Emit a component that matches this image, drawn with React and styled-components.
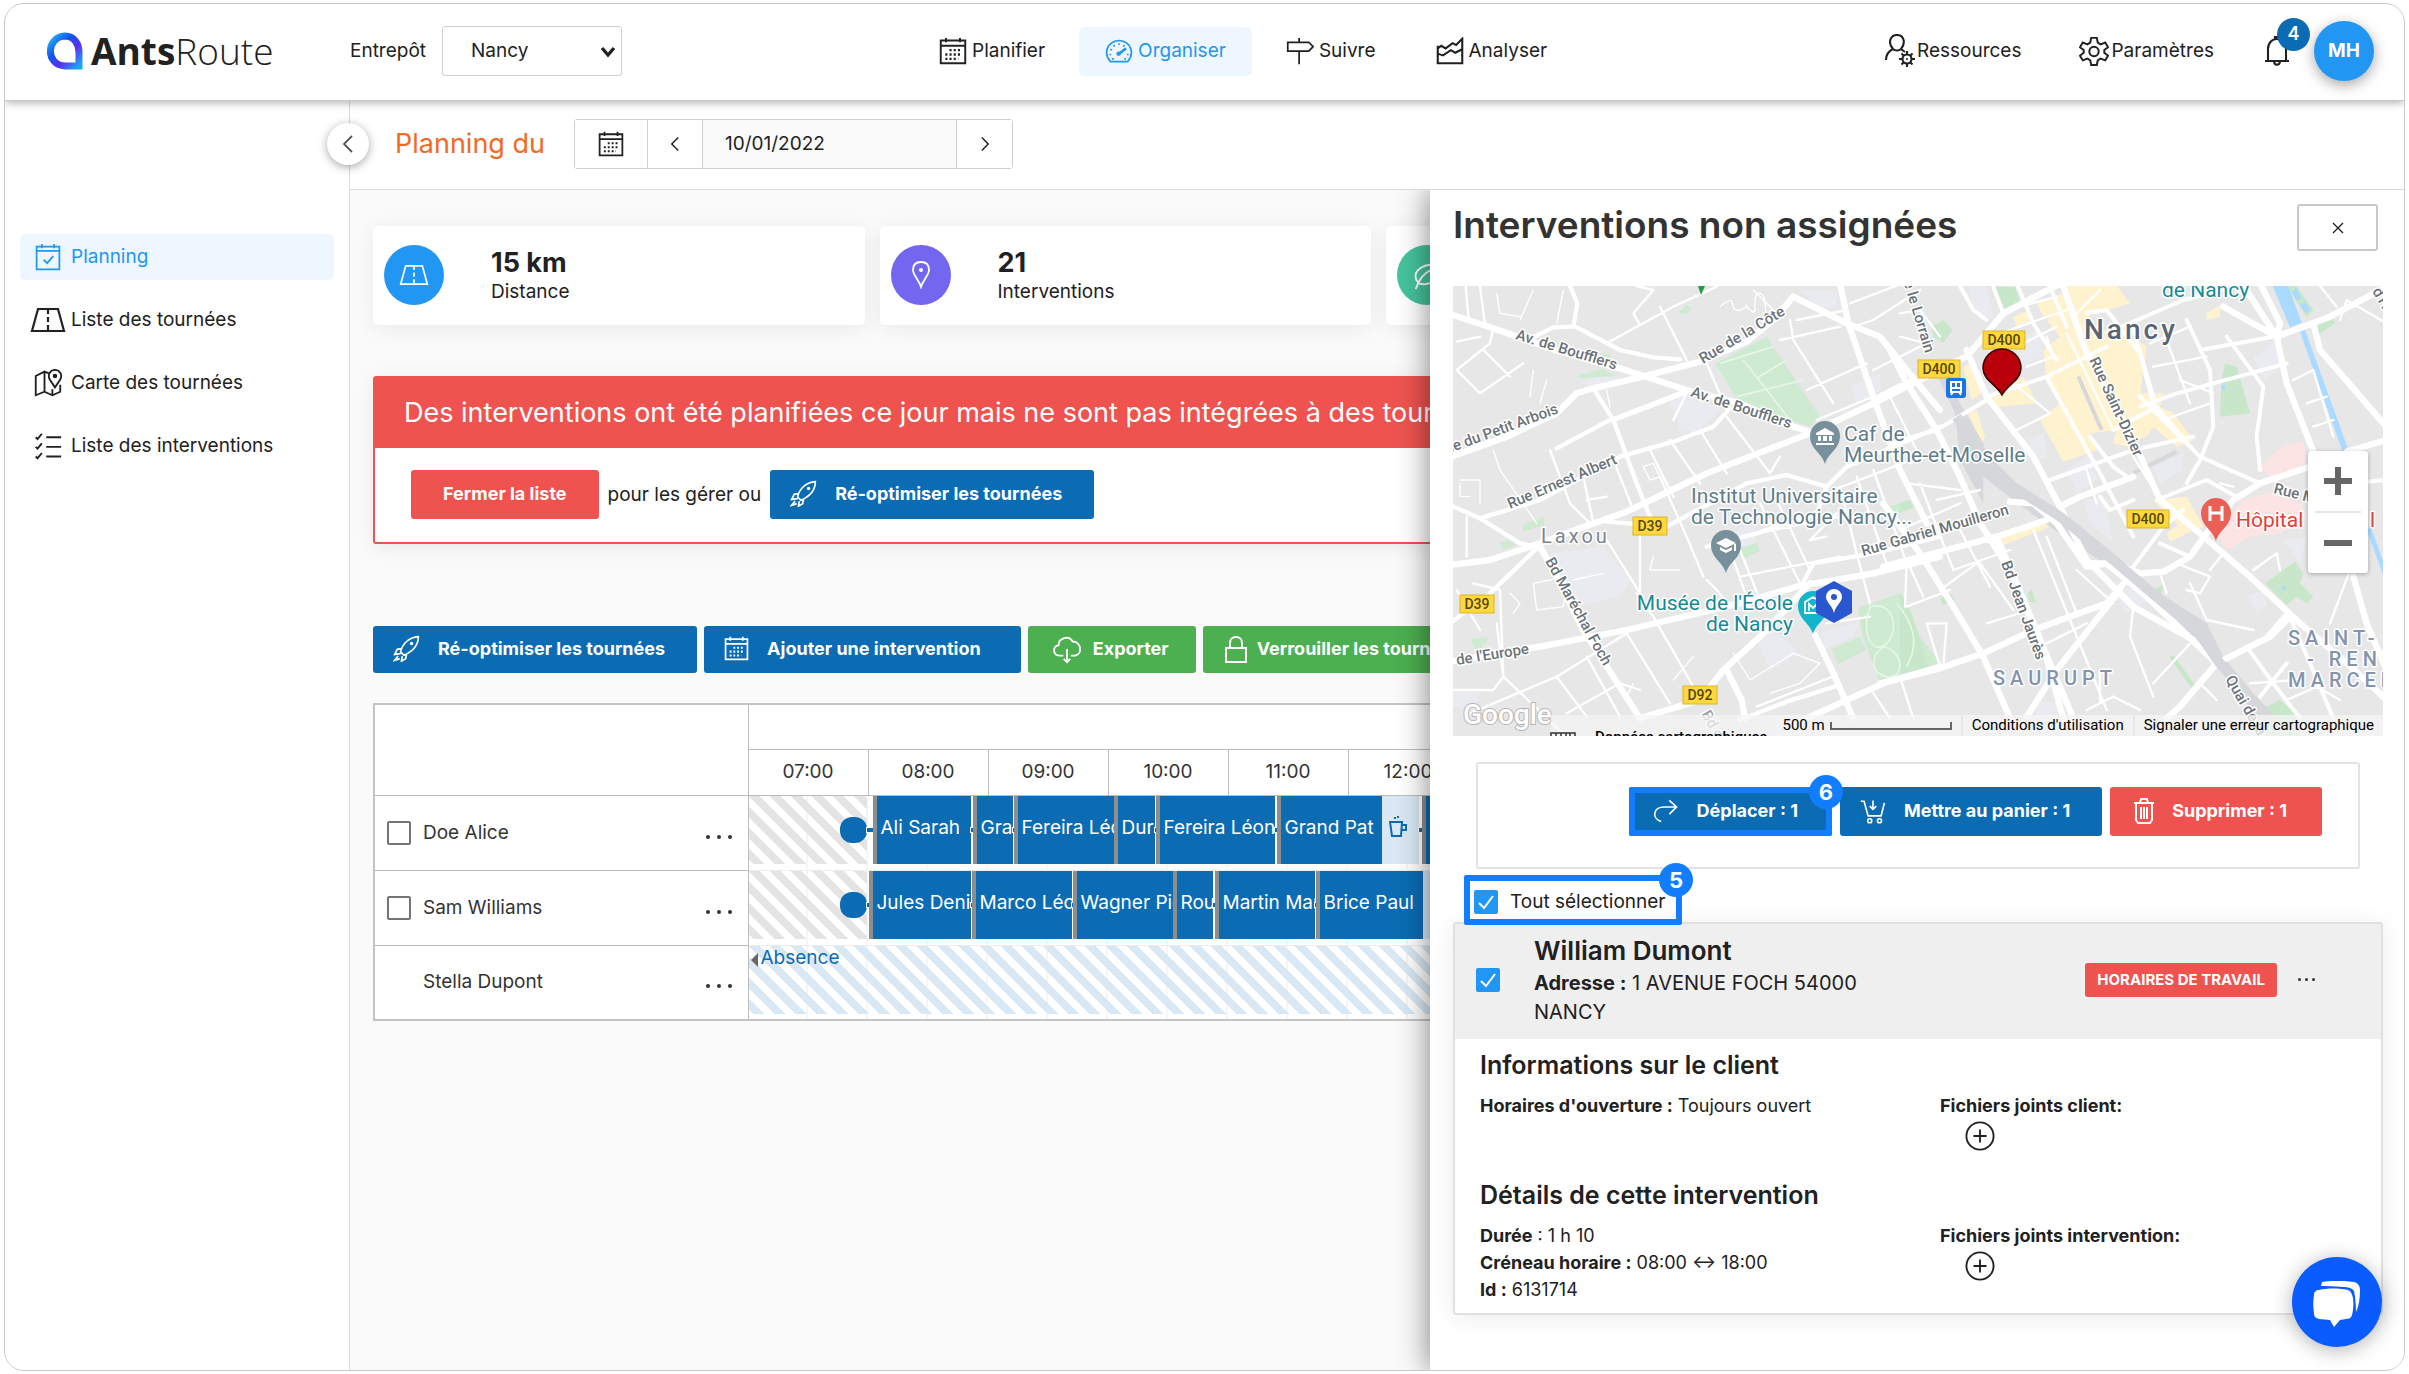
import React from "react";
import styled, { createGlobalStyle, css } from "styled-components";

const blue = "#0b6cb4";
const azure = "#2196f3";
const red = "#ef5350";
const green = "#4caf50";
const ink = "#212121";
const marker = "#127dff";

const GlobalStyle = createGlobalStyle`
  *, *::before, *::after { box-sizing: border-box; }
  html, body { margin: 0; background: #fff; }
  body, button, input, select {
    font-family: Inter, "Open Sans", sans-serif;
    font-size: 19px;
    line-height: 24px;
    color: ${ink};
  }
  button { cursor: pointer; }
  h1, h2, h3, p, ul { margin: 0; padding: 0; }
  svg { display: block; flex: none; }
`;

/* ---------- icons ---------- */

const Icon = ({ size = 28, w, h, box = "0 0 32 32", sw = 2, children }) => (
  <svg
    width={w || size}
    height={h || size}
    viewBox={box}
    fill="none"
    stroke="currentColor"
    strokeWidth={sw}
    aria-hidden="true"
  >
    {children}
  </svg>
);

const CalendarIcon = ({ size = 28, sw = 2.2 }) => (
  <Icon size={size} sw={sw}>
    <path d="M2 4H30V30H2ZM2 10H30M8 1V6M24 1V6" />
    <path strokeDasharray="2.4 2.4" d="M12 15H26M7.2 20H26M7.2 25H22" strokeWidth="2.6" />
  </Icon>
);
const PlanningIcon = () => (
  <Icon>
    <path d="M3 4H29V30H3ZM3 9H29M9 1V6M23 1V6M11 19L15 23L22 15" />
  </Icon>
);
const GaugeIcon = () => (
  <Icon>
    <path d="M6 28C-2 19 2 5 16 4C30 5 34 19 26 28Z" />
    <path d="M15 20L24 13" strokeWidth="3" />
    <circle cx="15.500" cy="19" r="2.500" fill="currentColor" stroke="none" />
    <path d="M16 7V9M10 9L11 11M22 9L21 11M6 14L8 15M5 20H7M27 20H25M8 25H10M24 25H22" strokeWidth="1.800" />
  </Icon>
);
const SignIcon = () => (
  <Icon>
    <path d="M2 6H26L31 11L26 16H2ZM15 1V6M15 16V31" />
  </Icon>
);
const AnalyseIcon = () => (
  <Icon sw={2.4}>
    <path d="M2 10V30H30V2L23 9L19 7L11 13L6 10L2 13M2 19L8 21L17 15L22 18L30 14" />
  </Icon>
);
const PersonGearIcon = () => (
  <Icon w={32} h={34} box="0 0 32 34" sw={2.1}>
    <path d="M3 26C3 20 6 17 10 15C4 8 8 1 14 1C21 1 23 9 18 15C16 17 12 17 10 15M18 15L22 18" />
    <circle cx="24" cy="25" r="4.500" />
    <circle cx="24" cy="25" r="1" fill="currentColor" stroke="none" />
    <path d="M24 17V20.500M24 29.500V33M16 25H19.500M28.500 25H32M18.500 19.500L20.800 21.800M27.200 28.200L29.500 30.500M18.500 30.500L20.800 28.200M27.200 21.800L29.500 19.500" />
  </Icon>
);
const GearIcon = () => (
  <Icon size={30} sw={2.1}>
    <path d="M13 2H19L20 7L23 9L28 7L31 12L27 15V18L31 21L28 26L23 24L20 26L19 31H13L12 26L9 24L4 26L1 21L5 18V15L1 12L4 7L9 9L12 7Z" />
    <circle cx="16" cy="16.500" r="5" />
  </Icon>
);
const BellIcon = () => (
  <Icon w={26} h={30} box="0 0 26 30" sw={2.1}>
    <path d="M1 25H25M4 25V13C4 7 8 3 13 3C18 3 22 7 22 13V25M11 3V1H15V3M10 25C10 30 16 30 16 25" />
  </Icon>
);
const RoadIcon = ({ w = 36, sw = 2.2 }) => (
  <Icon w={w} h={Math.round((w * 26) / 36)} box="0 0 36 26" sw={sw}>
    <path d="M8 2H28L34 24H2Z" />
    <path d="M18 2V24" strokeDasharray="5 3" />
  </Icon>
);
const MapIcon = () => (
  <Icon sw={2.1}>
    <path d="M17 5L12 3L2 8V30L12 26L21 30L30 26V18M12 3V26M21 23V30" />
    <path d="M24 21L18 12C15 6 19 1 24 1C29 1 33 6 30 12Z" />
    <circle cx="24" cy="8" r="1.500" fill="currentColor" />
  </Icon>
);
const ChecklistIcon = () => (
  <Icon sw={2.2}>
    <path d="M14 6H31M14 17H31M14 28H31M2 6L4 8L9 2M2 17L4 19L9 13M2 28L4 30L9 24" />
  </Icon>
);
const PinIcon = () => (
  <Icon w={18} h={28} box="0 0 18 28" sw={1.8}>
    <path d="M9 26C7 19 1 14 1 9C1 4 4 1 9 1C14 1 17 4 17 9C17 14 11 19 9 26Z" />
    <circle cx="9" cy="9" r="2" fill="currentColor" stroke="none" />
  </Icon>
);
const LeafIcon = () => (
  <Icon size={30} sw={2}>
    <path d="M7 25C-1 15 6 5 27 4C30 18 21 29 7 25M4 31C7 21 13 14 21 10" />
  </Icon>
);
const RocketIcon = () => (
  <Icon size={27} sw={2}>
    <path d="M9 20C11 11 18 3 30 2C30 13 22 20 13 24ZM10 16L5 17L2 23L9 22M16 23L15 28L10 31L11 25M6 25L2 30L8 28" />
    <circle cx="22" cy="10" r="2" fill="currentColor" stroke="none" />
  </Icon>
);
const CloudIcon = () => (
  <Icon w={30} h={30} sw={2}>
    <path d="M12 23H8C1 23 0 13 7 12C7 4 18 1 22 8C31 8 33 21 25 23H20M16 16V30M12.500 26.500L16 30L19.500 26.500" />
  </Icon>
);
const LockIcon = () => (
  <Icon w={22} h={28} box="0 0 22 28" sw={2}>
    <path d="M1 13H21V27H1ZM5 13V8C5 0 17 0 17 8V13" />
  </Icon>
);
const ArrowIcon = () => (
  <Icon size={26} sw={2}>
    <path d="M10 29C-2 25 0 11 14 11H29M20 3L29 11L20 20" />
  </Icon>
);
const CartIcon = () => (
  <Icon size={26} sw={2}>
    <path d="M1 4H5L10 22H26L30 6M16 3V13M12 10L16 14L20 10" />
    <circle cx="12" cy="28" r="2.500" />
    <circle cx="24" cy="28" r="2.500" />
  </Icon>
);
const TrashIcon = () => (
  <Icon w={20} h={26} box="0 0 20 26" sw={2}>
    <path d="M0 5H20M2 5V22L4 25H16L18 22V5M6 5L7 1H13L14 5M7 9V21M10 9V21M13 9V21" />
  </Icon>
);
const CupIcon = () => (
  <Icon w={18} h={22} box="0 0 18 22" sw={2}>
    <path d="M1 6H13L12 20H3ZM13 9H17V14H13M6 1V3M9 0V2" />
  </Icon>
);
const Chevron = ({ right, size = 16 }) => (
  <Icon w={size / 2} h={size} box="0 0 10 20" sw={1.8}>
    <path d={right ? "M1 2L9 10L1 18" : "M9 2L1 10L9 18"} />
  </Icon>
);
const PlusCircleIcon = () => (
  <Icon size={30} sw={2}>
    <circle cx="16" cy="16" r="14.500" />
    <path d="M16 9V23M9 16H23" />
  </Icon>
);
const ChatIcon = () => (
  <svg width="50" height="46" viewBox="0 0 50 46" fill="#fff" aria-hidden="true">
    <path d="M10 1C24-1 35 0 42 1C46 2 48 5 48 9C48 17 47 25 44 31C44 22 43 15 42 10C40 7 36 6 31 6C22 5 15 5 9 5Z" />
    <path d="M7 9C15 7 28 7 36 9C39 10 40 13 41 17C42 24 41 30 40 34C39 37 37 38 34 38L28 39L22 46L18 39L7 38C3 37 2 35 2 32C1 26 1 20 2 14C2 11 4 9 7 9Z" />
  </svg>
);
const LogoMark = () => (
  <svg width="36" height="38" viewBox="0 0 36 38" fill="none" aria-hidden="true">
    <defs>
      <linearGradient id="mark" x1="0" y1="0" x2="1" y2="1">
        <stop offset="0" stopColor="#20b7f5" />
        <stop offset="0.350" stopColor="#1254f0" />
        <stop offset="0.650" stopColor="#5b2ff0" />
        <stop offset="1" stopColor="#19a8f2" />
      </linearGradient>
    </defs>
    <path
      d="M32 34H18C-2 33-1 5 18 4C27 4 32 12 32 20Z"
      stroke="url(#mark)"
      strokeWidth="7"
    />
  </svg>
);

/* ---------- shell ---------- */

const Page = styled.div`
  padding: 3px 4px;
  height: 100vh;
  min-height: 900px;
`;
const Frame = styled.div`
  height: 100%;
  display: flex;
  flex-direction: column;
  border: 1px solid #c8c8c8;
  border-radius: 20px;
  overflow: hidden;
  background: #fff;
`;
const Header = styled.header`
  position: relative;
  z-index: 3;
  flex: none;
  height: 97px;
  display: grid;
  grid-template-columns: 345px 563px 1fr auto;
  align-items: center;
  padding: 0 30px 2px 0;
  background: #fff;
  border-bottom: 1px solid #c9c9c9;
  box-shadow: 0 2px 8px rgba(0, 0, 0, 0.3);
`;
const Logo = styled.a`
  display: flex;
  align-items: center;
  gap: 8px;
  padding-left: 42px;
  color: ${ink};
  text-decoration: none;
  font-family: "Open Sans", sans-serif;
  font-size: 37px;
  font-weight: 300;
  line-height: 44px;
  b { font-weight: 700; }
`;
const Depot = styled.label`
  display: flex;
  align-items: center;
  gap: 16px;
`;
const SelectBox = styled.span`
  position: relative;
  display: flex;
  svg { position: absolute; right: 6px; top: 19px; pointer-events: none; }
`;
const Select = styled.select`
  appearance: none;
  width: 180px;
  height: 50px;
  padding: 0 28px;
  background: #fff;
  border: 1px solid #cfcfcf;
  border-radius: 3px;
`;
const Nav = styled.nav`
  display: flex;
  align-items: center;
  gap: 8px;
`;
const NavLink = styled.a`
  display: flex;
  align-items: center;
  gap: 5px;
  height: 49px;
  padding: 0 26px;
  border-radius: 5px;
  color: ${ink};
  text-decoration: none;
  ${(p) => p.$active && css`color: ${azure}; background: #eef7ff;`}
`;
const Tools = styled.div`
  display: flex;
  align-items: center;
`;
const ToolLink = styled.a`
  display: flex;
  align-items: center;
  gap: 2px;
  margin-right: 58px;
  color: ${ink};
  text-decoration: none;
`;
const BellButton = styled.button`
  position: relative;
  margin: 0 24px 0 -8px;
  padding: 0;
  border: 0;
  background: none;
`;
const Badge = styled.span`
  position: absolute;
  top: -18px;
  right: -20px;
  width: 33px;
  height: 33px;
  border-radius: 50%;
  background: ${blue};
  color: #fff;
  font-weight: 600;
  font-size: 18px;
  line-height: 32px;
  text-align: center;
`;
const Avatar = styled.button`
  width: 60px;
  height: 60px;
  border: 0;
  border-radius: 50%;
  background: ${azure};
  color: #fff;
  font-weight: 700;
  box-shadow: 0 4px 14px rgba(0, 0, 0, 0.35);
`;

const Body = styled.div`
  flex: 1;
  min-height: 0;
  display: flex;
`;
const Sidebar = styled.aside`
  position: relative;
  z-index: 2;
  flex: none;
  width: 345px;
  padding: 133px 15px 0;
  border-right: 1px solid #d9d9d9;
  background: #fff;
`;
const SideList = styled.ul`
  list-style: none;
  display: flex;
  flex-direction: column;
  gap: 17px;
`;
const SideLink = styled.a`
  display: grid;
  grid-template-columns: 47px 1fr;
  align-items: center;
  height: 46px;
  padding-left: 4px;
  border-radius: 5px;
  color: ${ink};
  text-decoration: none;
  svg { justify-self: center; }
  ${(p) => p.$active && css`color: ${azure}; background: #eef7ff;`}
`;
const Collapse = styled.button`
  position: absolute;
  top: 22px;
  right: -20px;
  width: 42px;
  height: 42px;
  display: grid;
  place-items: center;
  padding: 0;
  border: 0;
  border-radius: 50%;
  background: #fff;
  color: #555;
  box-shadow: 0 2px 10px rgba(0, 0, 0, 0.35);
`;
const Main = styled.main`
  flex: 1;
  min-width: 0;
  display: flex;
  flex-direction: column;
`;
const DateBar = styled.div`
  flex: none;
  height: 89px;
  display: flex;
  align-items: center;
  gap: 29px;
  padding: 0 45px 3px;
  border-bottom: 1px solid #d9d9d9;
`;
const DateTitle = styled.h1`
  color: #f36a1f;
  font-size: 27px;
  line-height: 36px;
  font-weight: 400;
`;
const DateGroup = styled.div`
  display: flex;
  height: 50px;
  border: 1px solid #d0d0d0;
  border-radius: 3px;
`;
const DateButton = styled.button`
  width: ${(p) => (p.$wide ? 72 : 55)}px;
  display: grid;
  place-items: center;
  padding: 0;
  border: 0;
  background: #fff;
  & + & { border-left: 1px solid #d0d0d0; }
`;
const DateInput = styled.input`
  width: 255px;
  padding: 0 22px;
  border: 1px solid #d0d0d0;
  border-width: 0 1px;
  background: #fafafa;
`;
const Stage = styled.div`
  position: relative;
  flex: 1;
  min-height: 0;
  overflow: hidden;
  background: #fafafa;
  padding: 36px 20px 0 23px;
`;

/* ---------- planning ---------- */

const Cards = styled.div`
  display: grid;
  grid-template-columns: repeat(4, 1fr);
  gap: 15px;
`;
const Card = styled.section`
  display: flex;
  align-items: center;
  gap: 47px;
  height: 99px;
  padding: 0 0 2px 11px;
  border-radius: 5px;
  background: #fff;
  box-shadow: 0 3px 20px rgba(0, 0, 0, 0.07);
`;
const Disc = styled.span`
  width: 60px;
  height: 60px;
  display: grid;
  place-items: center;
  border-radius: 50%;
  color: #fff;
  background: ${(p) => p.$tone};
`;
const Figure = styled.div`
  font-size: 27px;
  line-height: 34px;
  font-weight: 700;
`;
const Alert = styled.section`
  margin-top: 51px;
  border: 2px solid ${red};
  border-radius: 3px;
  background: #fff;
  box-shadow: 0 3px 20px rgba(0, 0, 0, 0.07);
`;
const AlertTitle = styled.h2`
  padding: 0 29px;
  background: ${red};
  color: #fff;
  font-size: 27px;
  line-height: 70px;
  font-weight: 400;
  white-space: nowrap;
  overflow: hidden;
`;
const AlertBody = styled.div`
  display: flex;
  align-items: center;
  gap: 9px;
  padding: 22px 36px 23px;
`;
const Button = styled.button`
  display: flex;
  align-items: center;
  gap: ${(p) => p.$gap || 18}px;
  flex: none;
  height: ${(p) => p.$h || 47}px;
  padding: 0 ${(p) => p.$pad || 32}px 2px ${(p) => p.$lead || 20}px;
  border: 0;
  border-radius: 3px;
  background: ${(p) => p.$tone || blue};
  color: #fff;
  font-size: 18px;
  font-weight: 700;
  white-space: nowrap;
`;
const Actions = styled.div`
  display: flex;
  gap: 7px;
  margin: 82px 0 30px;
`;
const TableClip = styled.div`
  overflow: hidden;
`;
const Gantt = styled.table`
  table-layout: fixed;
  width: 2054px;
  border-collapse: collapse;
  border: 2px solid #c4c4c4;
  background: #fff;
  th, td { padding: 0; font-weight: 400; }
`;
const HeadCell = styled.th`
  height: ${(p) => p.$h || 46}px;
  border: 1px solid #bdbdbd;
  color: #333;
`;
const NameCell = styled.th`
  height: 75px;
  border: 1px solid #bdbdbd;
`;
const NameRow = styled.div`
  display: grid;
  grid-template-columns: 24px 1fr auto;
  align-items: center;
  gap: 12px;
  padding: 0 16px 0 12px;
  color: #333;
  text-align: left;
`;
const Tick = styled.input`
  appearance: none;
  width: 24px;
  height: 24px;
  margin: 0;
  border: 2px solid #757575;
  border-radius: 2px;
  background: #fff;
  &:checked {
    border-color: ${azure};
    background: ${azure} url("data:image/svg+xml,%3Csvg xmlns='http://www.w3.org/2000/svg' viewBox='0 0 20 20' fill='none' stroke='white' stroke-width='2'%3E%3Cpath d='M3 11L8 16L17 4'/%3E%3C/svg%3E") center / 20px no-repeat;
  }
`;
const MoreButton = styled.button`
  display: flex;
  gap: 7px;
  padding: 8px 0 0;
  border: 0;
  background: none;
  &::before, &::after, span {
    content: "";
    width: 4px;
    height: 4px;
    border-radius: 50%;
    background: #333;
  }
  ${(p) => p.$small && css`
    gap: 4px;
    padding: 0;
    &::before, &::after, span { width: 3px; height: 3px; }
  `}
`;
const LaneCell = styled.td`
  height: 75px;
  vertical-align: top;
  border-bottom: 1px solid #ededed;
  background: repeating-linear-gradient(90deg, transparent 0 58px, #ececec 58px 59px, transparent 59px 60px);
`;
const stripes = (c) => css`
  background: linear-gradient(45deg, ${c} 25%, transparent 25% 50%, ${c} 50% 75%, transparent 75%) 0 0 / 21px 21px;
`;
const Lane = styled.div`
  display: flex;
  align-items: center;
  height: 69px;
`;
const Closed = styled.div`
  ${stripes("#e4e4e4")}
  flex: none;
  width: 118px;
  height: 68px;
  display: flex;
  align-items: center;
  justify-content: flex-end;
`;
const Start = styled.span`
  width: 27px;
  height: 26px;
  border-radius: 12px;
  background: ${blue};
`;
const Travel = styled.span`
  flex: none;
  height: 4px;
  background: ${blue};
  box-shadow: 0 0 0 1px #fff;
`;
const Visit = styled.div`
  flex: none;
  height: 68px;
  padding-left: 4px;
  border-left: 4px solid #8e8e8e;
  background: ${blue};
  color: #fff;
  line-height: 64px;
  white-space: nowrap;
  overflow: hidden;
`;
const Pause = styled.div`
  flex: none;
  height: 68px;
  padding: 20px 7px;
  background: #d9e8f4;
  color: ${blue};
`;
const Absence = styled.div`
  ${stripes("#d9e8f3")}
  display: flex;
  align-items: flex-start;
  gap: 3px;
  height: 68px;
  padding: 0 2px;
  color: ${blue};
  &::before {
    content: "";
    margin-top: 7px;
    border: 7px solid transparent;
    border-left: 0;
    border-right-color: #666;
  }
`;

/* ---------- drawer ---------- */

const Drawer = styled.aside`
  position: absolute;
  top: 0;
  right: 0;
  bottom: 0;
  width: 974px;
  max-width: 100%;
  padding: 12px 21px 0 23px;
  background: #fff;
  box-shadow: -2px 0 28px rgba(0, 0, 0, 0.45);
`;
const DrawerHead = styled.div`
  display: flex;
  justify-content: space-between;
  align-items: flex-start;
  padding-right: 5px;
`;
const DrawerTitle = styled.h2`
  color: #333;
  font-size: 37px;
  line-height: 46px;
  font-weight: 600;
`;
const Close = styled.button`
  width: 81px;
  height: 47px;
  margin-top: 2px;
  display: grid;
  place-items: center;
  border: 2px solid #c9c9c9;
  border-radius: 3px;
  background: #fff;
`;
const MapBox = styled.div`
  position: relative;
  height: 450px;
  margin-top: 35px;
  overflow: hidden;
  background: #e7e7e7;
`;
const MapSvg = styled.svg`
  width: 100%;
  height: 450px;
  font-family: Roboto, sans-serif;
`;
const Zoom = styled.div`
  position: absolute;
  right: 15px;
  top: 165px;
  width: 60px;
  height: 122px;
  padding: 0 7px;
  display: grid;
  border-radius: 3px;
  background: #fff;
  box-shadow: 0 1px 4px rgba(0, 0, 0, 0.3);
`;
const ZoomButton = styled.button`
  display: grid;
  place-items: center;
  padding: 0;
  border: 0;
  background: none;
  color: #666;
  & + & { border-top: 2px solid #e6e6e6; }
`;
const Credits = styled.div`
  position: absolute;
  right: 0;
  bottom: 0;
  height: 21px;
  display: flex;
  gap: 2px;
  span, a {
    display: flex;
    align-items: center;
    gap: 5px;
    padding: 0 9px;
    background: rgba(245, 245, 245, 0.75);
    color: #000;
    font-family: Roboto, sans-serif;
    font-size: 15px;
    line-height: 21px;
    text-decoration: none;
  }
`;
const ScaleBar = styled.i`
  width: 122px;
  height: 8px;
  border: 2px solid #666;
  border-top: 0;
`;
const Bulk = styled.div`
  display: flex;
  justify-content: flex-end;
  align-items: flex-start;
  gap: 8px;
  height: 107px;
  margin: 26px 23px 0;
  padding: 23px 36px 0;
  border: 2px solid #e3e3e3;
  border-radius: 3px;
`;
const Callout = styled.div`
  position: relative;
  flex: none;
  display: flex;
  align-items: center;
  border-radius: 2px;
  ${(p) => p.$label && css`
    width: 218px;
    height: 50px;
    margin: 6px 0 -3px 11px;
    padding: 4px 10px 0;
    z-index: 1;
  `}
  &::before {
    content: "";
    position: absolute;
    inset: 0;
    border: 6px solid ${marker};
    border-radius: 2px;
    pointer-events: none;
  }
  &::after {
    content: "${(p) => p.$n}";
    position: absolute;
    right: -11px;
    top: -12px;
    width: 34px;
    height: 34px;
    border-radius: 50%;
    background: ${marker};
    color: #fff;
    font-size: 22px;
    font-weight: 700;
    line-height: 34px;
    text-align: center;
  }
`;
const SelectAll = styled.label`
  display: flex;
  align-items: center;
  gap: 12px;
`;
const JobCard = styled.article`
  border: 2px solid #e0e0e0;
  border-radius: 3px;
  box-shadow: 0 3px 24px rgba(0, 0, 0, 0.08);
`;
const JobHead = styled.header`
  display: grid;
  grid-template-columns: 58px 340px 1fr auto 104px;
  align-items: center;
  padding: 7px 0 11px 21px;
  height: 115px;
  background: #efefef;
`;
const Heading = styled.h3`
  font-size: ${(p) => (p.$name ? 26 : 25)}px;
  line-height: 36px;
  font-weight: 600;
`;
const Address = styled.p`
  font-size: 20px;
  line-height: 29px;
`;
const Tag = styled.span`
  grid-column: 4;
  padding: 0 12px;
  border-radius: 3px;
  background: ${red};
  color: #fff;
  font-size: 15px;
  font-weight: 700;
  line-height: 34px;
`;
const MoreSlot = styled.div`
  padding-left: 21px;
`;
const JobBody = styled.div`
  display: grid;
  grid-template-columns: 460px 1fr;
  padding: 8px 25px 6px;
  font-size: 18px;
  line-height: 27px;
  h3 { grid-column: 1 / -1; margin-bottom: 9px; }
  b { font-weight: 700; }
`;
const Detail = styled.div`
  min-height: 85px;
`;
const AddButton = styled.button`
  display: block;
  margin: 2px 0 0 25px;
  padding: 0;
  border: 0;
  background: none;
`;
const Chat = styled.button`
  position: absolute;
  right: 22px;
  bottom: 23px;
  width: 90px;
  height: 90px;
  display: grid;
  place-items: center;
  padding: 4px 0 0;
  border: 0;
  border-radius: 50%;
  background: #0a5cff;
  box-shadow: 0 3px 20px rgba(0, 0, 0, 0.3);
`;

/* ---------- map drawing ---------- */

const westMajor =
  "M30 132L160 175L330 235L540 295L740 360L900 400L1060 470L1110 485M460 355L600 322L780 275L920 215L1000 150L1060 80M30 562L200 500L350 430L410 370L460 355M30 885L150 870L300 820L420 775L560 725L800 610L1110 490L1300 400L1500 300M30 1175L300 1130L560 1080L900 1000L1070 950L1300 910L1500 860M1060 80L1220 160L1320 200L1400 300L1500 420M1200 40L1225 160L1300 380L1380 600L1460 760M1110 940L960 1100L850 1200L780 1290L600 1345M300 830L340 900L430 1080L520 1220L600 1345M1125 1095L1180 1210L1240 1345M860 1200L905 1290L915 1345M1100 1345L1330 1240L1500 1190";
const westMid =
  "M30 1060L150 970L290 835M30 705L120 745L300 690L540 560L700 515L820 470L870 415M120 745L240 820L290 830M350 535L500 455L740 362M390 48L412 100L400 170L340 172L260 212M410 172L540 240L640 262L720 268M500 755L680 770L800 705L920 640L1040 615L1160 650L1220 590L1500 470M1085 945L1120 880L1300 850L1500 800M900 1350L1040 1295L1200 1245M1160 650L1130 730L950 790L800 830M460 355L520 450L590 640L630 740";
const westMinor =
  "M77 48L85 140M120 48L135 165M160 175L150 220L50 300L120 370L250 280M50 215L120 200M130 240L210 320M590 48L640 60L580 130L600 165L700 110L830 50M660 110L740 270M600 165L500 220M800 280L860 420M740 370L700 450M530 450L740 370M330 540L390 700M390 700L450 760M430 620L460 760M520 570L580 720M630 540L700 680M690 510L780 640M780 480L860 610M860 440L990 610M990 610L1020 560M660 620L740 800L790 920M440 690L500 680M500 810L600 970L600 780M590 970L640 1040L760 1250M560 1090L690 1300M100 940L180 960L190 1220L160 1260L40 1260M80 740L80 860M170 1060L190 1220L380 1400M90 1330L350 1220L560 1090M350 1220L440 1340M440 1160L540 1340M380 1330L540 1240L600 1260M50 960L120 1080M800 930L830 960L870 1010M870 840L930 1010M900 920L1200 860M900 840L960 990M960 700L1080 940M1010 690L1110 900M950 790L1200 740M1160 800L1110 810L1190 730M1200 650L1250 850L1290 1000M1250 620L1340 880M1300 600L1400 880M1180 660L1440 560M1400 880L1395 1010M1020 210L1200 170M1050 150L1060 210L1180 400M1070 150L1220 120M1100 360L1280 280M1130 450L1300 380M1230 100L1440 20M1240 170L1300 150L1440 60M1300 300L1440 230M1350 380L1440 560M1160 1060L1290 1040M1300 1270L1350 1345M950 1310L1190 1215M1380 1220L1420 1345";
const westTiny =
  "M170 70L180 130L240 140M240 150L280 60M370 60L350 160M840 110C900 60 860 130 900 120S900 90 930 120S930 60 960 70S960 150 1000 140M280 300L270 380M320 330L300 400M500 360L510 410M160 540L180 600L290 760M60 630H120V700M60 640V680H90M610 590L640 580L660 620L630 630ZM280 940L380 920L370 1010L290 1020ZM400 930L490 910M640 860L630 900L720 900M210 970L240 1000L220 1030M880 1150L930 1230L1060 1150L1140 1180L1080 1240L990 1270M700 1230L760 1160M560 1280L580 1240M940 60L1020 140";

const eastMajor =
  "M-30 240L20 340L110 480L180 620L240 760L330 900L450 1180L520 1345M-60 380L0 350L200 260L310 130L560 0M200 240L260 380L400 560L480 710L560 870L700 1010L880 1110M480 20L560 250L640 400L700 510L780 690L900 790L1050 920L1200 1060L1330 1170L1460 1290M480 710L540 680L700 620M560 880L640 880L720 910L790 905L870 860L920 790L1000 690L1080 640L1230 590M1000 0L1130 200L1160 340L1240 545M970 110L1130 200L1290 140L1460 50M1080 40L1140 160L1130 200M1240 160L1260 240L1450 460M-50 890L140 840L290 800L440 750M330 695L400 700L470 760L560 890L620 880L740 980L950 1180M-60 1240L120 1195L250 1150L400 1080L620 1000L680 930M970 1170L1110 1100L1170 1040M950 1180L840 1310L800 1345M1360 920L1400 1060L1460 1200M1340 545L1460 510M-50 700L60 850L160 1010L250 1160L330 1345M290 800L430 1130L490 1345M660 960L470 1200L380 1340";
const eastMid =
  "M110 480L260 390M-30 520L110 480M180 48L220 120L260 150M280 50L310 130M350 40L400 160L470 270M450 50L500 170M260 380L440 320L620 230M440 320L600 610L700 800M450 630L700 540L880 500M600 680L630 720L700 690M570 500L640 590L680 620M720 380L900 560L1080 640M700 180L760 380M860 150L930 300L940 470L900 570L860 640M560 130L620 120L720 250L760 400L880 540M620 190L850 90L970 60M900 240L1120 200M980 200L1090 350L1070 500L1080 600M720 410L830 370L1160 280M640 480L770 410M770 690L920 630L1010 680M700 890L790 770L850 720M780 820L870 860M1100 1100L1160 1030M1230 650L1460 630M1170 1040L1300 1345M1040 1130L1120 1240L1200 1345M1160 1180L1080 1280";
const eastMinor =
  "M320 120L470 80M300 190L500 120M330 240L470 170M380 290L460 260L440 200M340 340L450 430M350 480L450 430M500 190L640 480M520 140L600 60M30 580L120 540M20 640L180 660M0 780L180 700M60 640L160 900M160 900L330 840M170 760L270 950M110 690L240 660M400 780L620 1320M440 800L530 1030M240 880L340 1020M230 880L120 960M20 1010L150 960M20 870L70 980M80 1060L120 1190M80 1060H140L130 1190M260 1060L390 1020M530 900L640 1000M700 1010L690 1100L760 1280M560 1060L440 1120M560 1320L640 1280L720 1320M600 1200V1300M830 880L930 920L900 970L860 960M880 1110L760 1240M800 970L780 910M870 940L920 1050L1060 1080M1000 650L960 640M930 900L970 850M1060 900L1130 850L1140 900M1290 1060L1350 900M1180 330L1240 300L1300 500M1220 400L1280 380M1240 470L1300 450M1320 150L1340 90L1460 160M1310 110L1260 48M750 220L870 170M760 290L920 260M800 210L870 400M790 450L930 400M840 330L940 370M560 600L590 700M700 560L750 640M120 200L60 120L0 130M0 200L80 220M1160 1290L1250 1250L1320 1290M1050 1240L1190 1230M900 1240L950 1290";

const Shield = ({ x, y, w = 34, t }) => (
  <g>
    <rect x={x} y={y} width={w} height="18" fill="#ffd93b" stroke="#d9b52a" strokeWidth="1" />
    <text x={x + w / 2} y={y + 14} textAnchor="middle" fontSize="14" fontWeight="500" fill="#544612">
      {t}
    </text>
  </g>
);
const Teardrop = ({ x, y, fill, children }) => (
  <g>
    <path
      d={`M${x} ${y + 28}C${x - 3} ${y + 17} ${x - 15} ${y + 13} ${x - 15} ${y}A15 15 0 0 1 ${x + 15} ${y}C${x + 15} ${y + 13} ${x + 3} ${y + 17} ${x} ${y + 28}Z`}
      fill={fill}
    />
    {children}
  </g>
);
const MapText = ({ x, y, size = 20, fill = "#607d8b", a = 0, weight = 400, space, anchor, children }) => (
  <text
    x={x}
    y={y}
    fontSize={size}
    fill={fill}
    fontWeight={weight}
    textAnchor={anchor}
    letterSpacing={space}
    stroke="#fff"
    strokeWidth="3"
    strokeLinejoin="round"
    paintOrder="stroke"
    transform={a ? `rotate(${a} ${x} ${y})` : undefined}
  >
    {children}
  </text>
);
const Street = (props) => <MapText size="15" fill="#6b7278" weight="500" {...props} />;

const Roads = ({ paths }) => (
  <g fill="none" stroke="#fff" strokeLinejoin="round" strokeLinecap="round">
    {paths.map(([d, w]) => (
      <path key={w} d={d} strokeWidth={w} />
    ))}
  </g>
);

const CityMap = () => (
  <MapSvg viewBox="0 0 930 450" preserveAspectRatio="xMidYMid slice" role="img" aria-label="Carte de Nancy">
    <rect width="930" height="450" fill="#e7e7e7" />
    <g transform="translate(-13 -16) scale(0.333333)">
      <path fill="#e9ebf0" d="M420 340L470 318L600 330L450 352ZM690 400L740 370L850 420L760 490L720 480ZM330 850L490 830L570 930L540 980L400 1010ZM950 1110L1000 1080L1080 1150L990 1200ZM1140 1090L1260 1050L1240 1100L1150 1140ZM1080 60L1190 60L1190 110L1140 120ZM40 1260L120 1270L100 1320L40 1310ZM870 790L940 760L950 830L900 840ZM1230 350L1320 310L1320 360L1250 400Z" />
      <path fill="#ceead0" d="M825 280L980 200L1140 440L1110 470L900 400ZM715 130L740 105L755 115L740 130ZM248 765L310 740L312 765L250 785ZM180 822L205 808L230 826L190 836ZM90 1106L142 1102L140 1120L128 1122L126 1140L106 1138ZM1175 1138L1260 1100L1278 1140L1195 1182ZM1255 1015L1385 968L1440 1100L1500 1180L1320 1240L1265 1090ZM1345 712L1405 690L1420 715L1365 732ZM895 835L952 818L958 845L905 866ZM416 315L490 298L528 318L420 324ZM484 250L512 252L510 268L486 262ZM1208 110L1222 130L1212 142Z" />
    </g>
    <g transform="translate(447 -16) scale(0.333333)">
      <path fill="#e9ebf0" d="M200 50L260 50L280 140L240 150ZM340 210L420 180L430 260L370 280ZM500 600L570 550L590 630L530 670ZM550 690L610 680L640 820L570 760ZM760 590L850 550L850 600L780 640ZM1060 260L1120 220L1150 290L1090 330ZM380 510L430 490L440 560L410 570ZM640 970L720 940L750 990L680 1030ZM420 1290L470 1300L490 1345H400ZM1150 810L1220 800L1200 880ZM1040 980L1090 960L1100 1010L1070 1030Z" />
      <path fill="#fff3cf" d="M500 48H650L690 100L620 120L560 130L600 180L660 180L740 230L720 370L790 370L780 410L820 430L880 510L830 530L760 470L740 500L700 510L680 530L640 520L650 480L570 490L590 540L490 575L420 450L480 400L440 340L430 240L480 200L440 150L480 120ZM410 100L490 70L500 120L430 140ZM340 140L390 120L400 150L350 170ZM190 290L210 280L245 370L215 390ZM205 430L230 420L255 500L245 520ZM250 400L370 320L410 400L300 410ZM300 790L430 750L450 770L310 825ZM760 690L860 680L910 770L860 790L800 730ZM800 790L850 755L880 780L810 815ZM920 130L960 105L960 140L920 150Z" />
      <path fill="#c8e6c9" d="M280 50H345L362 100L315 118ZM95 170L130 150L158 180L130 218L100 200ZM975 280L1010 290L1050 430L960 440L965 330ZM1095 940L1185 875L1210 910L1200 940L1240 980L1220 1000L1190 980L1160 1005ZM0 970L35 1030L88 1200L0 1210ZM120 985L150 970L165 990L130 1005ZM755 960L790 945L785 975ZM382 970L395 960L408 1000L390 995ZM808 1162L820 1155L885 1245L875 1255ZM1250 165L1300 145L1305 160L1255 195ZM1160 48L1190 48L1240 120L1220 140ZM1080 1320L1140 1290L1200 1345V1400H1100ZM0 700L30 690L40 710L0 730Z" />
      <path fill="#fde4e4" d="M1080 590L1150 525L1210 515L1220 570L1130 640ZM990 740L1030 690L1110 665L1200 700L1220 740L1140 790L1050 800L980 840L950 790Z" />
      <path fill="#aadaff" d="M1118 48L1165 48L1205 158L1170 172ZM1200 185L1215 180L1342 530L1328 545ZM1400 780L1412 770L1455 890V930ZM965 345L975 345L975 358L965 358ZM1140 955L1160 945L1155 960ZM1175 65L1190 55L1205 85L1190 92ZM1200 105L1215 95L1232 120L1218 130Z" />
      <path fill="#d5d7db" d="M100 290L130 290L180 400L250 520L260 560L330 640L480 720L640 850L780 970L920 1060L970 1160L1060 1270L1130 1345L1100 1380L950 1180L800 1020L640 900L450 770L340 690L250 620L250 700L180 570L165 430Z" />
      <path fill="none" stroke="#d5d7db" strokeWidth="12" d="M535 320L605 480M700 610L830 545" />
    </g>
    <g transform="translate(-13 -16) scale(0.333333)">
      <Roads paths={[[westTiny, 4], [westMinor, 7], [westMid, 13], [westMajor, 19]]} />
      <g fill="none" stroke="#e6f5e7" strokeWidth="5">
        <path d="M840 280L1000 230M910 270L1050 450M950 325L1040 270M890 380L1090 330M1290 1010C1360 990 1380 1080 1340 1120S1260 1090 1290 1010M1330 1130C1400 1150 1390 1230 1340 1220S1290 1160 1330 1130M1370 1000C1420 1060 1440 1120 1400 1190" />
      </g>
    </g>
    <g transform="translate(447 -16) scale(0.333333)">
      <Roads paths={[[eastMinor, 7], [eastMid, 12], [eastMajor, 19]]} />
      <path fill="none" stroke="#d5d7db" strokeWidth="30" d="M170 440L250 560L340 650L480 740L640 870L780 990L890 1080L960 1180L1100 1345" />
    </g>

    <g>
      <Street x="62" y="53" a="17">Av. de Boufflers</Street>
      <Street x="237" y="110" a="18">Av. de Boufflers</Street>
      <Street x="250" y="78" a="-31">Rue de la Côte</Street>
      <Street x="-15" y="171" a="-20">Rue du Petit Arbois</Street>
      <Street x="57" y="223" a="-23">Rue Ernest Albert</Street>
      <Street x="92" y="275" a="61">Bd Maréchal Foch</Street>
      <Street x="4" y="379" a="-9">de l'Europe</Street>
      <Street x="410" y="270" a="-16">Rue Gabriel Mouilleron</Street>
      <Street x="448" y="-12" a="73">de le Lorrain</Street>
      <Street x="636" y="74" a="65">Rue Saint-Dizier</Street>
      <Street x="548" y="277" a="70">Bd Jean Jaurès</Street>
      <Street x="820" y="207" a="14">Rue Marcel</Street>
      <Street x="772" y="393" a="60">Quai de la</Street>
      <Street x="248" y="428" a="60" fill="#9aa0a5">Bd de</Street>
      <Street x="919" y="5" a="60">d'H</Street>
    </g>
    <MapText x="88" y="257" size="20" fill="#7b8492" space="3">Laxou</MapText>
    <MapText x="631" y="53" size="28" fill="#5a6573" weight="500" space="3">Nancy</MapText>
    <MapText x="540" y="399" size="20" fill="#8593ad" weight="500" space="5">SAURUPT</MapText>
    <MapText x="835" y="359" size="20" fill="#8593ad" weight="500" space="5">SAINT-</MapText>
    <MapText x="854" y="380" size="20" fill="#8593ad" weight="500" space="5">- RENÉ</MapText>
    <MapText x="835" y="401" size="20" fill="#8593ad" weight="500" space="5">MARCEL</MapText>
    <MapText x="709" y="11" size="21" fill="#178a94">de Nancy</MapText>
    <MapText x="391" y="155" size="21">Caf de</MapText>
    <MapText x="391" y="176" size="21">Meurthe-et-Moselle</MapText>
    <MapText x="238" y="217" size="21">Institut Universitaire</MapText>
    <MapText x="238" y="238" size="21">de Technologie Nancy...</MapText>
    <MapText x="340" y="324" size="21" fill="#178a94" anchor="end">Musée de l'École</MapText>
    <MapText x="340" y="345" size="21" fill="#178a94" anchor="end">de Nancy</MapText>
    <MapText x="783" y="241" size="21" fill="#e04038">Hôpital</MapText>
    <MapText x="917" y="241" size="21" fill="#e04038">l</MapText>

    <Shield x={180} y={231} t="D39" />
    <Shield x={7} y={309} t="D39" />
    <Shield x={230} y={400} t="D92" />
    <Shield x={530} y={45} w={42} t="D400" />
    <Shield x={465} y={74} w={42} t="D400" />
    <Shield x={674} y={224} w={42} t="D400" />

    <path d="M245 0H252L248 9Z" fill="#1e9e4a" />
    <Teardrop x={372} y={150} fill="#78909c">
      <path d="M363 147L372 142L381 147V149H363ZM365 150H368V155H365ZM370 150H374V155H370ZM376 150H379V155H376ZM363 157H381V159H363Z" fill="#fff" />
    </Teardrop>
    <Teardrop x={273} y={259} fill="#78909c">
      <path d="M263 257L273 252L283 257L273 262ZM267 261L273 264L279 261V264L273 267L267 264ZM281 258H283V265H281Z" fill="#fff" />
    </Teardrop>
    <Teardrop x={360} y={320} fill="#12b5cb">
      <path d="M352 316L360 311L368 316V327H352ZM356 325V318L360 322L364 318V325" fill="none" stroke="#fff" strokeWidth="1.800" />
    </Teardrop>
    <path d="M381 295L399 305V327L381 337L363 327V305Z" fill="#2a56cf" />
    <path d="M381 327C379 319 373 316 373 311A8 8 0 0 1 389 311C389 316 383 319 381 327Z" fill="#fff" />
    <circle cx="381" cy="311" r="3" fill="#2a56cf" />
    <rect x="493" y="92" width="20" height="20" rx="3" fill="#1a73e8" />
    <path d="M498 96H508V106H498ZM500 106L498 109M506 106L508 109M503 96V102M498 102H508" fill="none" stroke="#fff" strokeWidth="2" />
    <path d="M549 109C543 98 530 94 530 82A19 19 0 0 1 568 82C568 94 555 98 549 109Z" fill="#b9000b" stroke="#3a0000" strokeWidth="1.500" />
    <Teardrop x={763} y={227} fill="#ea5f56">
      <path d="M757 220V235M769 220V235M757 227H769" fill="none" stroke="#fff" strokeWidth="3" />
    </Teardrop>
    <text x="10" y="438" fontSize="28" fontWeight="500" fill="#fff" stroke="#b5b5b5" strokeWidth="2" paintOrder="stroke">
      Google
    </text>
    <rect x="98" y="429" width="222" height="21" fill="#f5f5f5" fillOpacity="0.700" />
    <path d="M98 450V447H122V450M103 447V450M108 447V450M113 447V450M117 447V450" fill="none" stroke="#333" strokeWidth="1.500" />
    <text x="142" y="456" fontSize="15" fontWeight="500" fill="#000">Données cartographiques</text>
  </MapSvg>
);

/* ---------- data ---------- */

const hours = ["07:00", "08:00", "09:00", "10:00", "11:00", "12:00", "13:00", "14:00", "15:00", "16:00", "17:00", "18:00", "19:00", "20:00"];

const lanes = [
  {
    name: "Doe Alice",
    stops: [
      ["go", 6], ["job", 98, "Ali Sarah"], ["go", 2], ["job", 40, "Grand"], ["go", 1],
      ["job", 100, "Fereira Léon"], ["job", 41, "Durand"], ["go", 1], ["job", 119, "Fereira Léon"],
      ["go", 2], ["job", 105, "Grand Pat"], ["pause", 37], ["go", 3], ["job", 120, "Martin"],
    ],
  },
  {
    name: "Sam Williams",
    stops: [
      ["go", 2], ["job", 102, "Jules Denis"], ["go", 1], ["job", 100, "Marco Léon"], ["go", 1],
      ["job", 100, "Wagner Pierre"], ["job", 40, "Roux"], ["go", 2], ["job", 100, "Martin Marc"],
      ["go", 1], ["job", 107, "Brice Paul"], ["pause", 60],
    ],
  },
  { name: "Stella Dupont", absent: true },
];

const sideLinks = [
  ["Planning", <PlanningIcon />, true],
  ["Liste des tournées", <RoadIcon />],
  ["Carte des tournées", <MapIcon />],
  ["Liste des interventions", <ChecklistIcon />],
];
const navLinks = [
  ["Planifier", <CalendarIcon />],
  ["Organiser", <GaugeIcon />, true],
  ["Suivre", <SignIcon />],
  ["Analyser", <AnalyseIcon />],
];

const Stop = ({ kind, width, label }) => {
  if (kind === "go") return <Travel style={{ width }} />;
  if (kind === "pause") return <Pause style={{ width }}>{width < 50 && <CupIcon />}</Pause>;
  return <Visit style={{ width }}>{label}</Visit>;
};

export default function App() {
  return (
    <Page>
      <GlobalStyle />
      <Frame>
        <Header>
          <Logo href="#" aria-label="AntsRoute">
            <LogoMark />
            <span><b>Ants</b>Route</span>
          </Logo>
          <Depot>
            Entrepôt
            <SelectBox>
              <Select defaultValue="Nancy"><option>Nancy</option></Select>
              <Icon w={16} h={14} box="0 0 16 14" sw={3.4}><path d="M2 3L8 10L14 3" /></Icon>
            </SelectBox>
          </Depot>
          <Nav>
            {navLinks.map(([label, icon, active]) => (
              <NavLink key={label} href="#" $active={active}>{icon}{label}</NavLink>
            ))}
          </Nav>
          <Tools>
            <ToolLink href="#"><PersonGearIcon />Ressources</ToolLink>
            <ToolLink href="#"><GearIcon />Paramètres</ToolLink>
            <BellButton aria-label="Notifications"><BellIcon /><Badge>4</Badge></BellButton>
            <Avatar>MH</Avatar>
          </Tools>
        </Header>
        <Body>
          <Sidebar>
            <Collapse aria-label="Réduire le menu"><Chevron size={20} /></Collapse>
            <SideList>
              {sideLinks.map(([label, icon, active]) => (
                <li key={label}><SideLink href="#" $active={active}>{icon}{label}</SideLink></li>
              ))}
            </SideList>
          </Sidebar>
          <Main>
            <DateBar>
              <DateTitle>Planning du</DateTitle>
              <DateGroup>
                <DateButton $wide aria-label="Calendrier"><CalendarIcon size={26} /></DateButton>
                <DateButton aria-label="Jour précédent"><Chevron /></DateButton>
                <DateInput aria-label="Date" defaultValue="10/01/2022" />
                <DateButton aria-label="Jour suivant"><Chevron right /></DateButton>
              </DateGroup>
            </DateBar>
            <Stage>
              <Cards>
                <Card>
                  <Disc $tone={azure}><RoadIcon w={30} sw={2} /></Disc>
                  <div><Figure>15 km</Figure>Distance</div>
                </Card>
                <Card>
                  <Disc $tone="#7367f0"><PinIcon /></Disc>
                  <div><Figure>21</Figure>Interventions</div>
                </Card>
                <Card><Disc $tone="#45c49c"><LeafIcon /></Disc></Card>
                <Card />
              </Cards>
              <Alert>
                <AlertTitle>Des interventions ont été planifiées ce jour mais ne sont pas intégrées à des tournées</AlertTitle>
                <AlertBody>
                  <Button $tone={red} $h={49} $lead={32}>Fermer la liste</Button>
                  <span>pour les gérer ou</span>
                  <Button $h={49}><RocketIcon />Ré-optimiser les tournées</Button>
                </AlertBody>
              </Alert>
              <Actions>
                <Button><RocketIcon />Ré-optimiser les tournées</Button>
                <Button $pad={40}><CalendarIcon size={25} />Ajouter une intervention</Button>
                <Button $tone={green} $gap={11} $lead={24} $pad={27}><CloudIcon />Exporter</Button>
                <Button $tone={green} $gap={10} $lead={22}><LockIcon />Verrouiller les tournées</Button>
              </Actions>
              <TableClip>
                <Gantt>
                  <colgroup>
                    <col style={{ width: 374 }} />
                    {hours.map((h) => <col key={h} style={{ width: 120 }} />)}
                  </colgroup>
                  <thead>
                    <tr><HeadCell rowSpan={2} aria-label="Agent" /><HeadCell colSpan={hours.length} $h={45} aria-label="Journée" /></tr>
                    <tr>{hours.map((h) => <HeadCell key={h}>{h}</HeadCell>)}</tr>
                  </thead>
                  <tbody>
                    {lanes.map((lane) => (
                      <tr key={lane.name}>
                        <NameCell scope="row">
                          <NameRow>
                            {lane.absent ? <span /> : <Tick type="checkbox" id={lane.name} aria-label={lane.name} />}
                            <label htmlFor={lane.absent ? undefined : lane.name}>{lane.name}</label>
                            <MoreButton aria-label="Plus"><span /></MoreButton>
                          </NameRow>
                        </NameCell>
                        <LaneCell colSpan={hours.length}>
                          {lane.absent ? (
                            <Absence>Absence</Absence>
                          ) : (
                            <Lane>
                              <Closed><Start /></Closed>
                              {lane.stops.map(([kind, width, label], i) => (
                                <Stop key={i} kind={kind} width={width} label={label} />
                              ))}
                            </Lane>
                          )}
                        </LaneCell>
                      </tr>
                    ))}
                  </tbody>
                </Gantt>
              </TableClip>

              <Drawer>
                <DrawerHead>
                  <DrawerTitle>Interventions non assignées</DrawerTitle>
                  <Close aria-label="Fermer">
                    <Icon size={12} box="0 0 12 12" sw={1.4}><path d="M1 1L11 11M11 1L1 11" /></Icon>
                  </Close>
                </DrawerHead>
                <MapBox>
                  <CityMap />
                  <Zoom>
                    <ZoomButton aria-label="Zoom avant">
                      <Icon size={28} box="0 0 28 28" sw={6}><path d="M14 0V28M0 14H28" /></Icon>
                    </ZoomButton>
                    <ZoomButton aria-label="Zoom arrière">
                      <Icon size={28} box="0 0 28 28" sw={6}><path d="M0 14H28" /></Icon>
                    </ZoomButton>
                  </Zoom>
                  <Credits>
                    <span>500 m <ScaleBar /></span>
                    <a href="#">Conditions d'utilisation</a>
                    <a href="#">Signaler une erreur cartographique</a>
                  </Credits>
                </MapBox>
                <Bulk>
                  <Callout $n="6">
                    <Button $h={49} $lead={24} $pad={34}><ArrowIcon />Déplacer : 1</Button>
                  </Callout>
                  <Button $h={49}><CartIcon />Mettre au panier : 1</Button>
                  <Button $h={49} $lead={24} $pad={35} $tone={red}><TrashIcon />Supprimer : 1</Button>
                </Bulk>
                <Callout $n="5" $label>
                  <SelectAll><Tick type="checkbox" defaultChecked />Tout sélectionner</SelectAll>
                </Callout>
                <JobCard>
                  <JobHead>
                    <Tick type="checkbox" defaultChecked aria-label="William Dumont" />
                    <div>
                      <Heading $name>William Dumont</Heading>
                      <Address><b>Adresse :</b> 1 AVENUE FOCH 54000 NANCY</Address>
                    </div>
                    <Tag>HORAIRES DE TRAVAIL</Tag>
                    <MoreSlot><MoreButton $small aria-label="Plus"><span /></MoreButton></MoreSlot>
                  </JobHead>
                  <JobBody>
                    <Heading>Informations sur le client</Heading>
                    <Detail><b>Horaires d'ouverture :</b> Toujours ouvert</Detail>
                    <Detail><b>Fichiers joints client:</b><AddButton aria-label="Ajouter un fichier client"><PlusCircleIcon /></AddButton></Detail>
                    <Heading>Détails de cette intervention</Heading>
                    <Detail>
                      <p><b>Durée</b> : 1 h 10</p>
                      <p><b>Créneau horaire :</b> 08:00 ↔ 18:00</p>
                      <p><b>Id :</b> 6131714</p>
                    </Detail>
                    <Detail><b>Fichiers joints intervention:</b><AddButton aria-label="Ajouter un fichier intervention"><PlusCircleIcon /></AddButton></Detail>
                  </JobBody>
                </JobCard>
                <Chat aria-label="Discussion"><ChatIcon /></Chat>
              </Drawer>
            </Stage>
          </Main>
        </Body>
      </Frame>
    </Page>
  );
}
